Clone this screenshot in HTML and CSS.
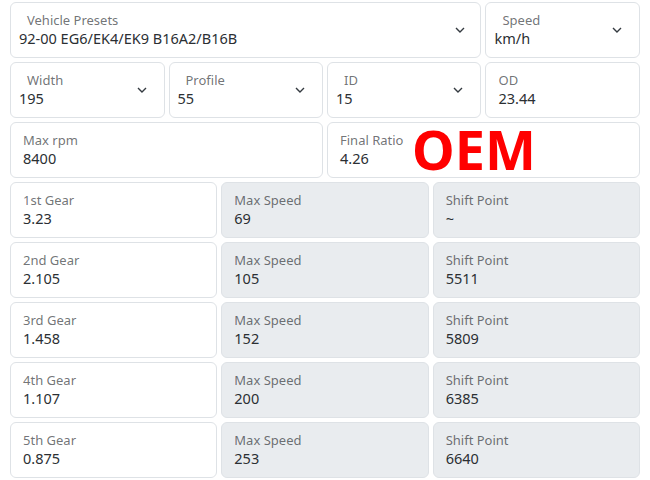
FILE: index.html
```html
<!DOCTYPE html>
<html lang="en">
<head>
  <meta charset="UTF-8">
  <meta name="viewport" content="width=device-width, initial-scale=1.0">
  <title>Gear Calculator</title>
  <link rel="stylesheet" href="styles.css">
</head>
<body>
  <div class="calc">
    <div class="field select span-9">
      <span class="label">Vehicle Presets</span>
      <span class="value">92-00 EG6/EK4/EK9 B16A2/B16B</span>
      <svg class="chevron" viewBox="0 0 10 6"><path d="M1 1l4 4 4-4"/></svg>
    </div>
    <div class="field select span-3">
      <span class="label">Speed</span>
      <span class="value">km/h</span>
      <svg class="chevron" viewBox="0 0 10 6"><path d="M1 1l4 4 4-4"/></svg>
    </div>

    <div class="field select span-3">
      <span class="label">Width</span>
      <span class="value">195</span>
      <svg class="chevron" viewBox="0 0 10 6"><path d="M1 1l4 4 4-4"/></svg>
    </div>
    <div class="field select span-3">
      <span class="label">Profile</span>
      <span class="value">55</span>
      <svg class="chevron" viewBox="0 0 10 6"><path d="M1 1l4 4 4-4"/></svg>
    </div>
    <div class="field select span-3">
      <span class="label">ID</span>
      <span class="value">15</span>
      <svg class="chevron" viewBox="0 0 10 6"><path d="M1 1l4 4 4-4"/></svg>
    </div>
    <div class="field span-3">
      <span class="label">OD</span>
      <span class="value">23.44</span>
    </div>

    <div class="field span-6">
      <span class="label">Max rpm</span>
      <span class="value">8400</span>
    </div>
    <div class="field span-6">
      <span class="label">Final Ratio</span>
      <span class="value">4.26</span>
      <span class="badge">OEM</span>
    </div>

    <div class="field span-4"><span class="label">1st Gear</span><span class="value">3.23</span></div>
    <div class="field readonly span-4"><span class="label">Max Speed</span><span class="value">69</span></div>
    <div class="field readonly span-4"><span class="label">Shift Point</span><span class="value">~</span></div>

    <div class="field span-4"><span class="label">2nd Gear</span><span class="value">2.105</span></div>
    <div class="field readonly span-4"><span class="label">Max Speed</span><span class="value">105</span></div>
    <div class="field readonly span-4"><span class="label">Shift Point</span><span class="value">5511</span></div>

    <div class="field span-4"><span class="label">3rd Gear</span><span class="value">1.458</span></div>
    <div class="field readonly span-4"><span class="label">Max Speed</span><span class="value">152</span></div>
    <div class="field readonly span-4"><span class="label">Shift Point</span><span class="value">5809</span></div>

    <div class="field span-4"><span class="label">4th Gear</span><span class="value">1.107</span></div>
    <div class="field readonly span-4"><span class="label">Max Speed</span><span class="value">200</span></div>
    <div class="field readonly span-4"><span class="label">Shift Point</span><span class="value">6385</span></div>

    <div class="field span-4"><span class="label">5th Gear</span><span class="value">0.875</span></div>
    <div class="field readonly span-4"><span class="label">Max Speed</span><span class="value">253</span></div>
    <div class="field readonly span-4"><span class="label">Shift Point</span><span class="value">6640</span></div>
  </div>
</body>
</html>
```

FILE: styles.css
```css
body {
  margin: 0;
  font-family: "Noto Sans", "Open Sans", sans-serif;
  background-color: #fff;
  color: #212529;
}
.calc {
  display: grid;
  grid-template-columns: repeat(12, 1fr);
  grid-auto-rows: 56px;
  gap: 4px;
  padding: 2px 10px 0 10px;
}
.span-3 { grid-column: span 3; }
.span-4 { grid-column: span 4; }
.span-6 { grid-column: span 6; }
.span-9 { grid-column: span 9; }
.field {
  position: relative;
  display: flex;
  flex-direction: column;
  box-sizing: border-box;
  padding: 9px 12px 0 12px;
  background-color: #fff;
  border: 1px solid #dee2e6;
  border-radius: 6px;
}
.field.readonly {
  background-color: #e9ecef;
}
.label {
  font-size: 13px;
  line-height: 17px;
  color: rgba(33, 37, 41, 0.65);
}
.value {
  font-size: 14.5px;
  line-height: 18px;
  white-space: nowrap;
  color: #2b2f33;
}
.select {
  padding-left: 8px;
}
.select .label {
  padding-left: 8px;
}
.chevron {
  position: absolute;
  right: 15px;
  top: 24px;
  width: 10px;
  height: 6px;
  fill: none;
  stroke: #343a40;
  stroke-width: 1.4;
}
.span-3 .chevron {
  right: 17px;
}
.badge {
  position: absolute;
  left: 84px;
  top: -4px;
  font-size: 54px;
  font-weight: 700;
  color: #ff0000;
  line-height: 60px;
}
```
